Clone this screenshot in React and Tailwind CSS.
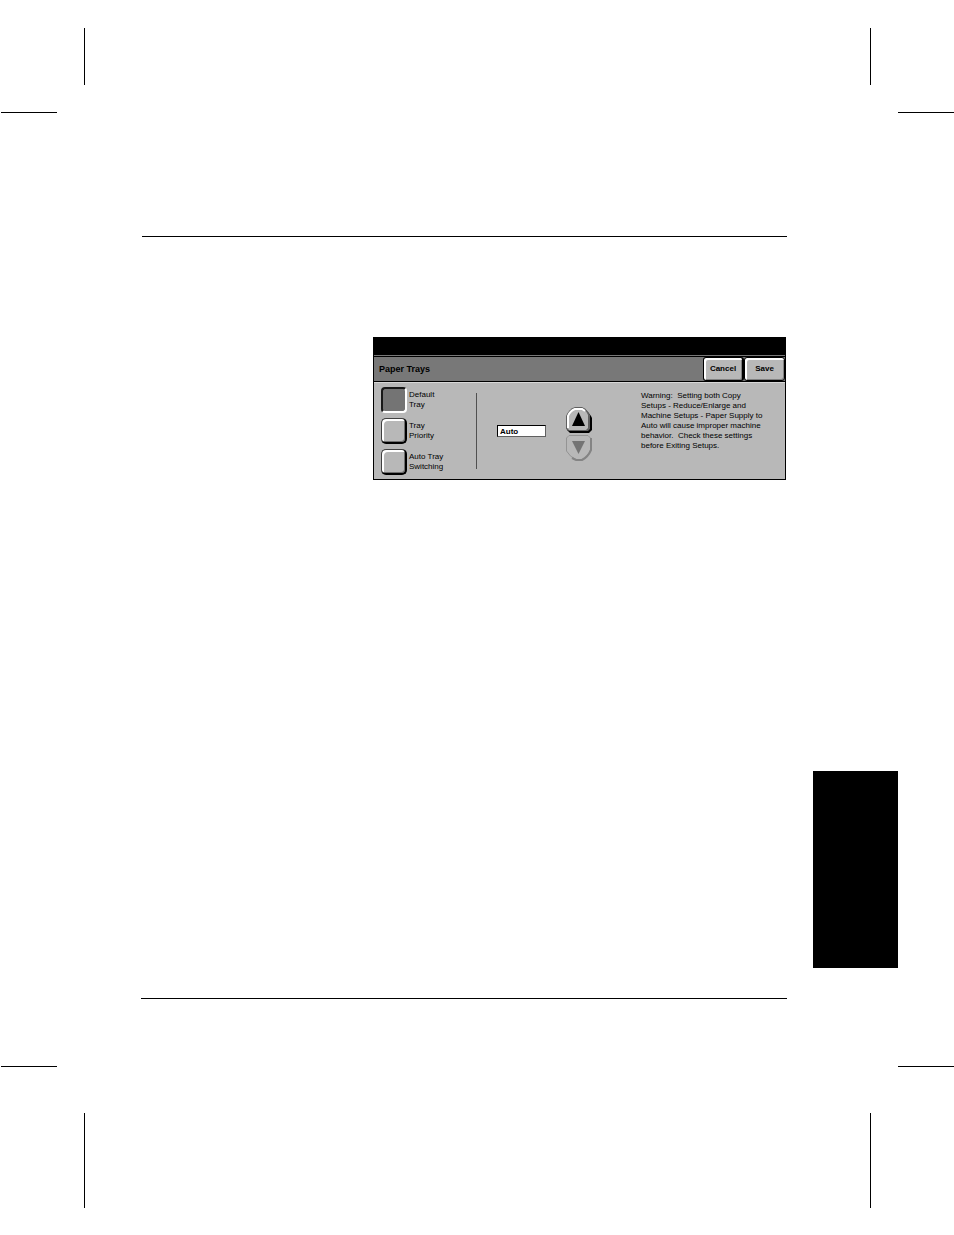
import React, { useState } from 'react';

const trays = [
  { id: 'default', lines: ['Default', 'Tray'] },
  { id: 'priority', lines: ['Tray', 'Priority'] },
  { id: 'switching', lines: ['Auto Tray', 'Switching'] },
];

const warning = [
  'Warning:  Setting both Copy',
  'Setups - Reduce/Enlarge and',
  'Machine Setups - Paper Supply to',
  'Auto will cause improper machine',
  'behavior.  Check these settings',
  'before Exiting Setups.',
];

const CornerMarks = ({ className }) => (
  <div className={`flex justify-between pl-[84px] pr-[83px] ${className}`}>
    <div className="w-px bg-black" />
    <div className="w-px bg-black" />
  </div>
);

const SideMarks = ({ className }) => (
  <div className={`flex justify-between pl-px ${className}`}>
    <div className="h-px w-14 bg-black" />
    <div className="h-px w-14 bg-black" />
  </div>
);

const TrayButton = ({ lines, active, onClick }) => (
  <button type="button" aria-pressed={active} onClick={onClick} className="flex items-center gap-[2px] text-left">
    {active ? (
      <span className="size-[26px] rounded-[4px] border-2 border-t-[#181818] border-l-[#181818] border-r-white border-b-white bg-[#747474]" />
    ) : (
      <span className="size-[26px] rounded-[5px] border border-r-2 border-b-2 border-[#404040] border-r-black border-b-black bg-[#b8b8b8] shadow-[inset_2px_2px_0_#fff,inset_-1px_-1px_0_#707070]" />
    )}
    <span className="block">
      {lines.map((line) => (
        <span key={line} className="block">{line}</span>
      ))}
    </span>
  </button>
);

const UpArrow = () => (
  <svg viewBox="0 0 26 26" className="size-[26px]" aria-hidden="true">
    <path d="M9 1H17Q20 2 25 9L26 11V23L23 26H4L1 23V9Q4 3 9 1Z" fill="#000" />
    <path d="M9 0H16Q21 2 24 8V22L22 24H3L0 22V9Q3 2 9 0Z" fill="#606060" />
    <path d="M9 1H16Q20 3 22 8V21L20 23H3L1 21V9Q4 3 9 1Z" fill="#b8b8b8" />
    <path d="M2 21V9Q4 4 9 2H16L19 4" fill="none" stroke="#fff" strokeWidth="2" />
    <path d="M12.5 5L19 19H6Z" fill="#000" />
  </svg>
);

const DownArrow = () => (
  <svg viewBox="0 0 26 26" className="size-[26px]" aria-hidden="true">
    <path d="M3 0.5H22L24.5 3V15Q22 22 16 24.5H10Q4 22 0.5 16V3Z" fill="#b8b8b8" stroke="#949494" />
    <path d="M25 3V15Q22 22 16 25H10L6 23" fill="none" stroke="#848484" strokeWidth="2" />
    <path d="M6 6H19L12.5 19Z" fill="#747474" />
  </svg>
);

const PaperTrays = () => {
  const [selected, setSelected] = useState('default');
  const [tray, setTray] = useState('Auto');

  return (
    <section className="border border-black bg-[#b8b8b8] font-['Liberation_Sans',sans-serif] text-[8px] leading-[10px] text-black">
      <div className="h-[17px] bg-black" />
      <div className="flex h-[27px] items-center justify-between border-t border-b border-t-[#787878] border-b-black bg-[#787878] pl-[5px] shadow-[inset_0_1px_0_#000]">
        <h1 className="text-[9px] font-bold">Paper Trays</h1>
        <div className="flex h-full pt-px font-bold">
          <button type="button" className="w-[41px] rounded-[3px] border border-r-2 border-black bg-[#b8b8b8] shadow-[inset_2px_2px_0_#fff,inset_-1px_-1px_0_#808080]">Cancel</button>
          <button type="button" className="w-[41px] rounded-[3px] border border-black bg-[#b8b8b8] shadow-[inset_2px_2px_0_#fff,inset_-1px_-1px_0_#808080]">Save</button>
        </div>
      </div>

      <div className="flex h-[97px] border-t border-[#d8d8d8] pl-[7px]">
        <div className="flex w-[95px] flex-col items-start gap-[5px] pt-1">
          {trays.map(({ id, lines }) => (
            <TrayButton key={id} lines={lines} active={selected === id} onClick={() => setSelected(id)} />
          ))}
        </div>
        <div className="mt-[10px] h-[76px] w-px bg-[#505050]" />

        <div className="flex items-center pl-5">
          <input
            type="text"
            aria-label="Default tray"
            value={tray}
            onChange={(e) => setTray(e.target.value)}
            className="h-3 w-[49px] border border-t-black border-l-black border-r-[#606060] border-b-[#606060] bg-white pl-[2px] text-[8px] leading-[10px] font-bold"
          />
          <div className="ml-5 flex flex-col gap-[2px] pt-[6px]">
            <button type="button" aria-label="Previous tray"><UpArrow /></button>
            <button type="button" aria-label="Next tray" disabled><DownArrow /></button>
          </div>
        </div>

        <p className="ml-auto w-[144px] pt-2 whitespace-pre">
          {warning.map((line) => (
            <span key={line} className="block">{line}</span>
          ))}
        </p>
      </div>
    </section>
  );
};

const App = () => {
  return (
    <div className="flex flex-col bg-white pt-7 pb-[27px]">
      <CornerMarks className="h-[57px]" />
      <SideMarks className="mt-[27px]" />

      <main className="mt-[123px] mr-[167px] ml-[142px] border-t border-black pt-[100px] pr-px pl-[231px]">
        <PaperTrays />
      </main>

      {/* chapter thumb tab */}
      <div className="mt-[291px] mr-14 h-[197px] w-[85px] self-end bg-black" />
      <div className="mt-[30px] mr-[167px] ml-[141px] h-px bg-black" />

      <SideMarks className="mt-[67px]" />
      <CornerMarks className="mt-[46px] h-[95px]" />
    </div>
  );
};

export default App;
